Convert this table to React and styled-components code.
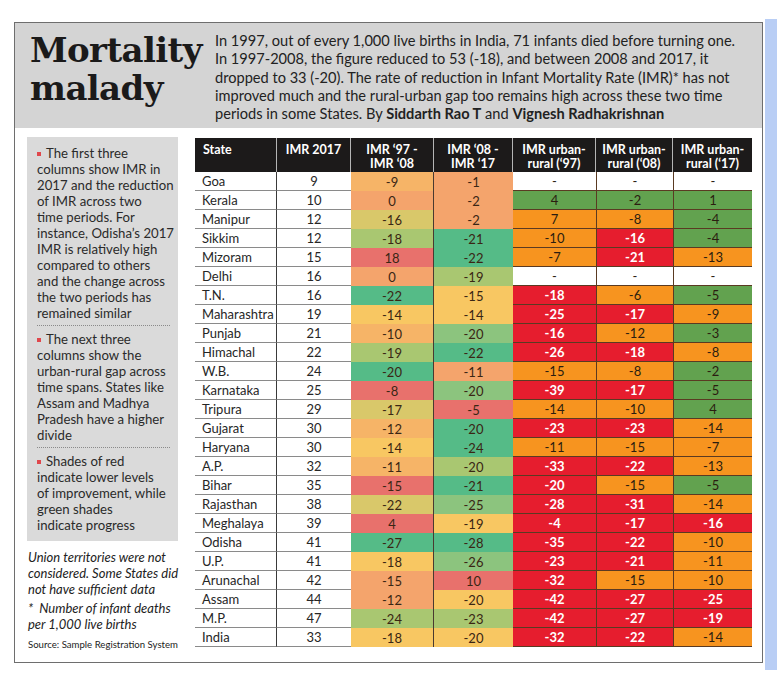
import styled, { createGlobalStyle } from "styled-components";

const GlobalStyle = createGlobalStyle`
  body {
    margin: 0;
    background: #fff;
  }
`;

const shades = {
  O: "#f4a46c",
  YO: "#f6b467",
  Y: "#f8c762",
  YG: "#d9c86a",
  LG: "#a9c771",
  MG: "#8cc47e",
  G: "#55bb87",
  R: "#e8716c",
};

const tones = {
  R: "#e61d2e",
  O: "#f7941f",
  G: "#62a24f",
  W: "#ffffff",
};

// state, imr 2017, '97-'08, shade, '08-'17, shade, urban-rural '97/'08/'17 as [value, tone]
const rows = [
  ["Goa", 9, "-9", "YO", "-1", "O", ["-", "W"], ["-", "W"], ["-", "W"]],
  ["Kerala", 10, "0", "O", "-2", "O", ["4", "G"], ["-2", "G"], ["1", "G"]],
  ["Manipur", 12, "-16", "YG", "-2", "O", ["7", "O"], ["-8", "O"], ["-4", "G"]],
  ["Sikkim", 12, "-18", "LG", "-21", "G", ["-10", "O"], ["-16", "R"], ["-4", "G"]],
  ["Mizoram", 15, "18", "R", "-22", "G", ["-7", "O"], ["-21", "R"], ["-13", "O"]],
  ["Delhi", 16, "0", "O", "-19", "LG", ["-", "W"], ["-", "W"], ["-", "W"]],
  ["T.N.", 16, "-22", "G", "-15", "Y", ["-18", "R"], ["-6", "O"], ["-5", "G"]],
  ["Maharashtra", 19, "-14", "Y", "-14", "Y", ["-25", "R"], ["-17", "R"], ["-9", "O"]],
  ["Punjab", 21, "-10", "YO", "-20", "MG", ["-16", "R"], ["-12", "O"], ["-3", "G"]],
  ["Himachal", 22, "-19", "LG", "-22", "G", ["-26", "R"], ["-18", "R"], ["-8", "O"]],
  ["W.B.", 24, "-20", "G", "-11", "O", ["-15", "O"], ["-8", "O"], ["-2", "G"]],
  ["Karnataka", 25, "-8", "R", "-20", "MG", ["-39", "R"], ["-17", "R"], ["-5", "G"]],
  ["Tripura", 29, "-17", "YG", "-5", "R", ["-14", "O"], ["-10", "O"], ["4", "G"]],
  ["Gujarat", 30, "-12", "YO", "-20", "G", ["-23", "R"], ["-23", "R"], ["-14", "O"]],
  ["Haryana", 30, "-14", "Y", "-24", "G", ["-11", "O"], ["-15", "O"], ["-7", "O"]],
  ["A.P.", 32, "-11", "YO", "-20", "LG", ["-33", "R"], ["-22", "R"], ["-13", "O"]],
  ["Bihar", 35, "-15", "R", "-21", "G", ["-20", "R"], ["-15", "O"], ["-5", "G"]],
  ["Rajasthan", 38, "-22", "YG", "-25", "MG", ["-28", "R"], ["-31", "R"], ["-14", "O"]],
  ["Meghalaya", 39, "4", "R", "-19", "Y", ["-4", "R"], ["-17", "R"], ["-16", "R"]],
  ["Odisha", 41, "-27", "G", "-28", "G", ["-35", "R"], ["-22", "R"], ["-10", "O"]],
  ["U.P.", 41, "-18", "Y", "-26", "MG", ["-23", "R"], ["-21", "R"], ["-11", "O"]],
  ["Arunachal", 42, "-15", "O", "10", "R", ["-32", "R"], ["-15", "O"], ["-10", "O"]],
  ["Assam", 44, "-12", "O", "-20", "Y", ["-42", "R"], ["-27", "R"], ["-25", "R"]],
  ["M.P.", 47, "-24", "LG", "-23", "LG", ["-42", "R"], ["-27", "R"], ["-19", "R"]],
  ["India", 33, "-18", "Y", "-20", "Y", ["-32", "R"], ["-22", "R"], ["-14", "O"]],
];

const heads = [
  ["State", true],
  ["IMR 2017"],
  ["IMR \u201897 -", "IMR \u201808"],
  ["IMR \u201808 -", "IMR \u201817"],
  ["IMR urban-", "rural (\u201897)"],
  ["IMR urban-", "rural (\u201808)"],
  ["IMR urban-", "rural (\u201817)"],
];

const notes = [
  ["The first three", "columns show IMR in", "2017 and the reduction", "of IMR across two", "time periods. For", "instance, Odisha\u2019s 2017", "IMR is relatively high", "compared to others", "and the change across", "the two periods has", "remained similar"],
  ["The next three", "columns show the", "urban-rural gap across", "time spans. States like", "Assam and Madhya", "Pradesh have a higher", "divide"],
  ["Shades of red", "indicate lower levels", "of improvement, while", "green shades", "indicate progress"],
];

const Page = styled.div`
  display: flex;
  align-items: flex-start;
  padding: 19px 0 0 14px;
`;

const Frame = styled.div`
  width: 747px;
  height: 639px;
  margin-top: 3px;
  border: 1px solid #6e6e6e;
  display: flex;
  flex-direction: column;
`;

const Strip = styled.div`
  width: 12px;
  height: 651px;
  margin-left: 2px;
  background: #b9cef5;
`;

const Header = styled.div`
  height: 105px;
  background: #d4d4d4;
  display: flex;
  align-items: flex-start;
  padding: 8px 0 0 15px;
  box-sizing: border-box;
`;

const Title = styled.h1`
  width: 185px;
  flex: none;
  margin: 0;
  font-family: "DejaVu Serif", "Liberation Serif", serif;
  font-weight: 700;
  font-size: 34px;
  line-height: 38px;
  letter-spacing: -0.6px;
  color: #1b1a1a;
`;

const Lead = styled.p`
  margin: 1px 0 0;
  font-family: Lato, "Noto Sans", sans-serif;
  font-size: 14.6px;
  line-height: 18.3px;
  color: #222;

  b {
    font-weight: 700;
  }
`;

const Line = styled.span`
  display: block;
  white-space: nowrap;
`;

const Body = styled.div`
  display: flex;
  align-items: flex-start;
  gap: 17px;
  padding: 9px 10px 0 12px;
`;

const Side = styled.div`
  width: 151px;
  flex: none;
`;

const InfoBox = styled.div`
  background: #dadada;
  padding: 8px 8px 8px 10px;
  font-family: Lato, "Noto Sans", sans-serif;
  font-size: 13.2px;
  line-height: 16px;
  color: #2a2a2a;
`;

const Point = styled.div`
  & + & {
    margin-top: 4px;
    padding-top: 5px;
    border-top: 1px dotted #8a8a8a;
  }
`;

const Bullet = styled.span`
  display: inline-block;
  width: 4px;
  height: 4px;
  margin: 0 5px 2px 0;
  background: #e0474c;
  vertical-align: middle;
`;

const Note = styled.p`
  margin: ${(p) => (p.$first ? "8px" : "3px")} 0 0 1px;
  font-family: Lato, "Noto Sans", sans-serif;
  font-style: italic;
  font-size: 13px;
  line-height: 16px;
  color: #222;
`;

const Source = styled.p`
  margin: 7px 0 0 1px;
  font-family: Lato, "Noto Sans", sans-serif;
  font-size: 9.6px;
  line-height: 12px;
  white-space: nowrap;
  color: #222;
`;

const Grid = styled.div`
  margin-top: 1px;
  display: grid;
  grid-template-columns: 82px 74px 83px 79px 83px 77px 79px;
  grid-template-rows: 34px;
  grid-auto-rows: 19px;
  width: 557px;
  font-family: Lato, "Noto Sans", sans-serif;
  font-size: 13px;
`;

const HeadCell = styled.div`
  background: #1c1a1a;
  color: #fff;
  font-weight: 700;
  font-size: 12.5px;
  line-height: 13.5px;
  padding: 5px 0 0 ${(p) => (p.$left ? "8px" : "0")};
  text-align: ${(p) => (p.$left ? "left" : "center")};
  border-right: ${(p) => (p.$last ? "none" : "1px solid #b5b5b5")};
`;

const Cell = styled.div`
  box-sizing: border-box;
  display: flex;
  align-items: center;
  line-height: 18px;
  color: #262626;
`;

const NameCell = styled(Cell)`
  padding-left: 7px;
  border-bottom: 1px solid #8a8a8a;
  border-right: 1px solid #3a3a3a;
`;

const ImrCell = styled(Cell)`
  justify-content: center;
  border-bottom: 1px solid #8a8a8a;
`;

const ShadeCell = styled(Cell)`
  justify-content: center;
  background: ${(p) => shades[p.$shade]};
  color: #3a2614;
  border-right: ${(p) => (p.$divider ? "1px solid #4a3a30" : "none")};
`;

const GapCell = styled(Cell)`
  justify-content: center;
  background: ${(p) => tones[p.$tone]};
  color: ${(p) => (p.$tone === "R" ? "#fff" : "#2b1d10")};
  font-weight: ${(p) => (p.$tone === "R" ? 700 : 400)};
  border-bottom: 1px solid #5a3a22;
  border-left: ${(p) => (p.$first ? "none" : "1px solid #5a3a22")};
`;

export default function App() {
  return (
    <>
      <GlobalStyle />
      <Page>
        <Frame>
          <Header>
            <Title>
              Mortality
              <br />
              malady
            </Title>
            <Lead>
              <Line>In 1997, out of every 1,000 live births in India, 71 infants died before turning one.</Line>
              <Line>In 1997-2008, the figure reduced to 53 (-18), and between 2008 and 2017, it</Line>
              <Line>dropped to 33 (-20). The rate of reduction in Infant Mortality Rate (IMR)* has not</Line>
              <Line>improved much and the rural-urban gap too remains high across these two time</Line>
              <Line>
                periods in some States. By <b>Siddarth Rao T</b> and <b>Vignesh Radhakrishnan</b>
              </Line>
            </Lead>
          </Header>
          <Body>
            <Side>
              <InfoBox>
                {notes.map((lines, i) => (
                  <Point key={i}>
                    {lines.map((l, j) => (
                      <Line key={j}>
                        {j === 0 && <Bullet />}
                        {l}
                      </Line>
                    ))}
                  </Point>
                ))}
              </InfoBox>
              <Note $first>
                <Line>Union territories were not</Line>
                <Line>considered. Some States did</Line>
                <Line>not have sufficient data</Line>
              </Note>
              <Note>
                <Line>*&nbsp; Number of infant deaths</Line>
                <Line>per 1,000 live births</Line>
              </Note>
              <Source>Source: Sample Registration System</Source>
            </Side>
            <Grid>
              {heads.map((h, i) => (
                <HeadCell key={i} $left={i === 0} $last={i === heads.length - 1}>
                  {h[0]}
                  {typeof h[1] === "string" && (
                    <>
                      <br />
                      {h[1]}
                    </>
                  )}
                </HeadCell>
              ))}
              {rows.map((r) => [
                <NameCell key={r[0] + "n"}>{r[0]}</NameCell>,
                <ImrCell key={r[0] + "i"}>{r[1]}</ImrCell>,
                <ShadeCell key={r[0] + "a"} $shade={r[3]} $divider>
                  {r[2]}
                </ShadeCell>,
                <ShadeCell key={r[0] + "b"} $shade={r[5]}>
                  {r[4]}
                </ShadeCell>,
                ...[r[6], r[7], r[8]].map((g, k) => (
                  <GapCell key={r[0] + "g" + k} $tone={g[1]} $first={k === 0}>
                    {g[0]}
                  </GapCell>
                )),
              ])}
            </Grid>
          </Body>
        </Frame>
        <Strip />
      </Page>
    </>
  );
}
